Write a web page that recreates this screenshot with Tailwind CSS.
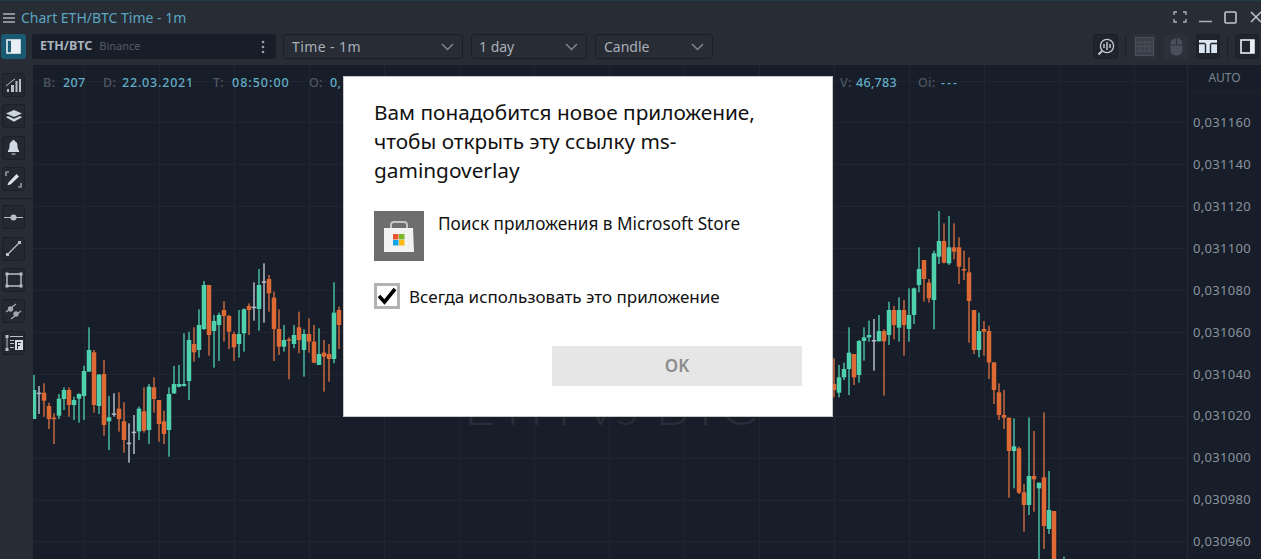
<!DOCTYPE html>
<html lang="ru">
<head>
  <meta charset="UTF-8" />
  <title>Chart ETH/BTC</title>
  <script src="https://cdn.jsdelivr.net/npm/@tailwindcss/browser@4"></script>
</head>
<body class="bg-[#272c35] h-[559px] w-[1261px] overflow-hidden relative font-['Noto_Sans',sans-serif]">
  <!-- title bar -->
  <div class="h-[33px] flex items-center border-t border-[#1f3d49] pl-[3px] pr-0">
    <svg class="w-[12px] h-[12px] mr-[6px] mt-[1px]" viewBox="0 0 12 12" stroke="#a9b2bd" stroke-width="1.4"><path d="M0 2h12M0 6h12M0 10h12"/></svg>
    <span class="text-[14px] text-[#5ba6c2]">Chart ETH/BTC Time - 1m</span>
    <div class="ml-auto flex items-center">
      <svg class="w-[14px] h-[12px] mr-[12px]" viewBox="0 0 14 12" fill="none" stroke="#aab2bc" stroke-width="1.4"><path d="M1 4V1h3M10 1h3v3M13 8v3h-3M4 11H1V8"/></svg>
      <svg class="w-[13px] h-[12px] mr-[12px]" viewBox="0 0 13 12" stroke="#aab2bc" stroke-width="1.5"><path d="M0 10.5h13"/></svg>
      <svg class="w-[13px] h-[13px] mr-[13px]" viewBox="0 0 13 13" fill="none" stroke="#c0c6ce" stroke-width="1.6"><rect x="1" y="1" width="11" height="11" rx="1"/></svg>
      <svg class="w-[12px] h-[12px] -mr-[1px]" viewBox="0 0 12 12" stroke="#c0c6ce" stroke-width="1.5"><path d="M1 1l10 10M11 1L1 11"/></svg>
    </div>
  </div>

  <!-- toolbar -->
  <div class="h-[32px] flex items-start pt-[1px] pl-[1px]">
    <button class="w-[25px] h-[25px] bg-[#1a5a72] rounded-[3px] flex items-center justify-center mr-[6px]">
      <svg class="w-[15px] h-[15px]" viewBox="0 0 15 15"><rect x="1" y="1" width="13" height="13" fill="none" stroke="#e8eef3" stroke-width="1.6"/><rect x="5" y="1" width="9" height="13" fill="#e8eef3"/></svg>
    </button>
    <div class="w-[244px] h-[25px] bg-[#181e29] rounded-[3px] flex items-center pl-[8px] mr-[7px]">
      <span class="text-[12.500px] font-bold text-[#aab2bc]">ETH/BTC</span>
      <span class="text-[11px] text-[#535b67] ml-[7px]">Binance</span>
      <svg class="w-[4px] h-[14px] ml-auto mr-[11px]" viewBox="0 0 4 14" fill="#98a0aa"><circle cx="2" cy="2" r="1.3"/><circle cx="2" cy="7" r="1.3"/><circle cx="2" cy="12" r="1.3"/></svg>
    </div>
    <div class="w-[180px] h-[25px] border border-[#1a1f28] rounded-[3px] flex items-center pl-[8px] pr-[8px] mr-[8px] text-[14px] text-[#a9b0b9]">
      <span class="tracking-[0.400px]">Time - 1m</span>
      <svg class="w-[13px] h-[8px] ml-auto" viewBox="0 0 13 8" fill="none" stroke="#7f8792" stroke-width="1.5"><path d="M1 1l5.5 5.5L12 1"/></svg>
    </div>
    <div class="w-[116px] h-[25px] border border-[#1a1f28] rounded-[3px] flex items-center pl-[7px] pr-[8px] mr-[8px] text-[14px] text-[#a9b0b9]">
      <span>1 day</span>
      <svg class="w-[13px] h-[8px] ml-auto" viewBox="0 0 13 8" fill="none" stroke="#7f8792" stroke-width="1.5"><path d="M1 1l5.5 5.5L12 1"/></svg>
    </div>
    <div class="w-[118px] h-[25px] border border-[#1a1f28] rounded-[3px] flex items-center pl-[8px] pr-[8px] text-[14px] text-[#a9b0b9]">
      <span>Candle</span>
      <svg class="w-[13px] h-[8px] ml-auto" viewBox="0 0 13 8" fill="none" stroke="#7f8792" stroke-width="1.5"><path d="M1 1l5.5 5.5L12 1"/></svg>
    </div>

    <div class="ml-auto flex items-center h-[25px] pr-[2px]">
      <button class="w-[25px] h-[25px] bg-[#1f242d] border border-[#1a1f28] rounded-[3px] flex items-center justify-center">
        <svg class="w-[18px] h-[18px]" viewBox="0 0 18 18" fill="none" stroke="#c3c9d0" stroke-width="1.3"><circle cx="10" cy="8" r="6.6"/><path d="M5 13l-3.5 3.5" stroke-width="2"/><path d="M7 6v4M10 4v8M13 6v4" stroke-width="1.5"/></svg>
      </button>
      <div class="w-px h-[22px] bg-[#1b2027] mx-[7px]"></div>
      <button class="w-[23px] h-[25px] bg-[#2b3039] rounded-[3px] flex items-center justify-center mr-[8px]">
        <svg class="w-[19px] h-[19px]" viewBox="0 0 19 19" fill="#3a404a" stroke="#4a505b"><rect x="0.5" y="0.5" width="18" height="18"/><path d="M0 5h19M0 9.500h19M0 14h19M5 5v4M10 5v4M14 5v4M5 9.500v4.500M10 9.500v4.500M14 9.500v4.500"/></svg>
      </button>
      <button class="w-[24px] h-[25px] bg-[#2b3039] rounded-[3px] flex items-center justify-center mr-[8px]">
        <svg class="w-[13px] h-[18px]" viewBox="0 0 13 18"><rect x="0.500" y="0.500" width="12" height="17" rx="5" fill="#4a505b"/><path d="M0 7h13M6.500 1v6" stroke="#2b3039"/></svg>
      </button>
      <button class="w-[24px] h-[25px] bg-[#1f242d] border border-[#1a1f28] rounded-[3px] flex items-center justify-center">
        <svg class="w-[18px] h-[13px]" viewBox="0 0 18 13"><rect width="18" height="13" fill="#dbe6f2"/><path d="M6.500 4v9M11.500 4v9M0 3.500h6.500M11.500 3.500H18" fill="none" stroke="#1f242d" stroke-width="1.400"/></svg>
      </button>
      <div class="w-px h-[22px] bg-[#1b2027] mx-[7px]"></div>
      <button class="w-[24px] h-[25px] bg-[#1f242d] border border-[#1a1f28] rounded-[3px] flex items-center justify-center">
        <svg class="w-[15px] h-[15px]" viewBox="0 0 15 15"><rect x="1" y="1" width="13" height="13" fill="none" stroke="#e8eef3" stroke-width="1.6"/><rect x="10" y="1" width="4" height="13" fill="#e8eef3"/></svg>
      </button>
    </div>
  </div>

  <!-- main -->
  <div class="flex h-[494px]">
    <!-- left tools -->
    <div class="w-[33px] shrink-0 pt-[8px] pl-[2px] flex flex-col">
      <div class="flex flex-col gap-[7.400px] pr-[8px]">
        <button class="w-[23px] h-[24px] bg-[#232831] border border-[#1a1f28] rounded-[3px] flex items-center justify-center">
          <svg class="w-[15px] h-[14px]" viewBox="0 0 15 14" fill="#b7c0ca"><path d="M1 14v-3h2v3zM5 14V7h3v7zM9.500 14V3h2v11zM13 14V1h2v13z"/><path d="M0 8L6 3l3-2" fill="none" stroke="#b7c0ca"/></svg>
        </button>
        <button class="w-[23px] h-[24px] bg-[#232831] border border-[#1a1f28] rounded-[3px] flex items-center justify-center">
          <svg class="w-[16px] h-[13px]" viewBox="0 0 16 13" fill="#ccd5de"><path d="M8 0l8 3.500-8 3.500-8-3.500z"/><path d="M2 6l6 2.700L14 6l2 1.200-8 4.500-8-4.500z"/></svg>
        </button>
        <button class="w-[23px] h-[24px] bg-[#232831] border border-[#1a1f28] rounded-[3px] flex items-center justify-center">
          <svg class="w-[11px] h-[15px]" viewBox="0 0 11 15" fill="#d2dbe5"><path d="M5.500 0c1 0 1.300.7 1.300 1.300C9 2 9.500 4 9.500 6c0 2 .5 3.500 1.500 4.500V12H0v-1.500C1 9.500 1.500 8 1.500 6c0-2 .5-4 2.700-4.700C4.200.7 4.500 0 5.500 0z"/><path d="M3.500 13.500h4v1h-4z"/></svg>
        </button>
        <button class="w-[23px] h-[24px] bg-[#232831] border border-[#1a1f28] rounded-[3px] flex items-center justify-center">
          <svg class="w-[17px] h-[17px]" viewBox="0 0 17 17" fill="none" stroke="#b7c0ca" stroke-width="1.200"><path d="M1 5V1h3M16 12v4h-3"/><path d="M3.500 11.500l8-8.500 2.500 2.500-8.500 8-3 .7z" fill="#dbe3ec" stroke="none"/></svg>
        </button>
      </div>
      <div class="h-px bg-[#1a1f28] mt-[7px] mb-[6px] -ml-[2px]"></div>
      <div class="flex flex-col gap-[7.400px] pr-[8px]">
        <button class="w-[23px] h-[24px] bg-[#232831] border border-[#1a1f28] rounded-[3px] flex items-center justify-center">
          <svg class="w-[19px] h-[7px]" viewBox="0 0 19 7" fill="#b7c0ca"><path d="M0 3h19v1H0z"/><circle cx="9.500" cy="3.500" r="3"/></svg>
        </button>
        <button class="w-[23px] h-[24px] bg-[#232831] border border-[#1a1f28] rounded-[3px] flex items-center justify-center">
          <svg class="w-[17px] h-[17px]" viewBox="0 0 17 17" fill="#b7c0ca" stroke="#b7c0ca"><path d="M3 14L14 3" stroke-width="1.200"/><rect x="1" y="13" width="3" height="3" stroke="none"/><rect x="13" y="1" width="3" height="3" stroke="none"/></svg>
        </button>
        <button class="w-[23px] h-[24px] bg-[#232831] border border-[#1a1f28] rounded-[3px] flex items-center justify-center">
          <svg class="w-[18px] h-[16px]" viewBox="0 0 18 16" fill="#b7c0ca"><path d="M2 2h14v12H2z" fill="none" stroke="#b7c0ca" stroke-width="1.400"/><rect width="3" height="3" x="0.500" y="0.500"/><rect width="3" height="3" x="14.500" y="0.500"/><rect width="3" height="3" x="0.500" y="12.500"/><rect width="3" height="3" x="14.500" y="12.500"/></svg>
        </button>
        <button class="w-[23px] h-[24px] bg-[#232831] border border-[#1a1f28] rounded-[3px] flex items-center justify-center">
          <svg class="w-[17px] h-[17px]" viewBox="0 0 17 17" fill="#a0a8b3" stroke="#a0a8b3" stroke-width="1.300"><path d="M1 9L11 1M6 16L16 8"/><circle cx="5.500" cy="6" r="2"/><circle cx="11" cy="11" r="2"/></svg>
        </button>
        <button class="w-[23px] h-[24px] bg-[#232831] border border-[#1a1f28] rounded-[3px] flex items-center justify-center">
          <svg class="w-[18px] h-[16px]" viewBox="0 0 18 16" fill="#b7c0ca"><rect x="0.500" y="0" width="3" height="3"/><rect x="0.500" y="13" width="3" height="3"/><rect x="1.500" y="2" width="1" height="11"/><path d="M5 1h13v1H5zM5 5h4v1H5zM5 8h4v1H5zM5 12h4v1H5z"/><rect x="10" y="5" width="8" height="10" fill="#d5dde6"/><path d="M12 7h4v1h-3v2h2v1h-2v3h-1z" fill="#232831"/></svg>
        </button>
      </div>
    </div>

    <!-- chart -->
    <div class="relative w-[1154px] shrink-0 bg-[#171e29] overflow-hidden">
      <svg id="chart" class="absolute inset-0" width="1154" height="494" viewBox="33 65 1154 494"></svg>
      <div class="absolute left-0 right-0 top-[304px] text-center text-[55px] leading-[70px] font-light text-[#272e39] pl-[2px] font-['Lato',sans-serif] tracking-[1px]">ETH vs BTC</div>
      <div class="absolute left-[10px] top-[9px] flex items-center text-[12.500px] leading-[18px] font-medium tracking-[0.300px] text-[#4e5661]">
        <span class="w-[20px]">B:</span><span class="w-[40px] text-[#62adc7]">207</span>
        <span class="w-[19px]">D:</span><span class="w-[91px] tracking-[0.800px] text-[#62adc7]">22.03.2021</span>
        <span class="w-[19px]">T:</span><span class="w-[77px] tracking-[1px] text-[#62adc7]">08:50:00</span>
        <span class="w-[21px]">O:</span><span class="w-[510px] text-[#62adc7]">0,</span>
        <span class="w-[16px]">V:</span><span class="w-[62px] text-[#62adc7]">46,783</span>
        <span class="w-[23px]">Oi:</span><span class="tracking-[2px] text-[#62adc7]">---</span>
      </div>
    </div>

    <!-- price axis -->
    <div class="flex-1 bg-[#171e29] border-l border-[#222934] flex flex-col overflow-hidden text-[13px] tracking-[0.300px] text-[#8a929c]">
      <div class="h-[27px] shrink-0 border-b border-[#1e252f] flex items-center justify-center text-[12px] tracking-normal text-[#7d858f]">AUTO</div>
      <div class="shrink-0 pl-[5px] pt-[10px]">
        <div class="h-[41.900px] flex items-center">0,031160</div>
        <div class="h-[41.900px] flex items-center">0,031140</div>
        <div class="h-[41.900px] flex items-center">0,031120</div>
        <div class="h-[41.900px] flex items-center">0,031100</div>
        <div class="h-[41.900px] flex items-center">0,031080</div>
        <div class="h-[41.900px] flex items-center">0,031060</div>
        <div class="h-[41.900px] flex items-center">0,031040</div>
        <div class="h-[41.900px] flex items-center">0,031020</div>
        <div class="h-[41.900px] flex items-center">0,031000</div>
        <div class="h-[41.900px] flex items-center">0,030980</div>
        <div class="h-[41.900px] flex items-center">0,030960</div>
      </div>
    </div>
  </div>

  <!-- windows dialog over the chart -->
  <div class="absolute left-[343px] top-[76px] w-[490px] h-[341px] bg-white border border-[#c8c8c8] pl-[30px] pr-[30px] pt-[21px]">
    <h1 class="text-[20.800px] leading-[29px] text-[#111] w-[410px]">Вам понадобится новое приложение, чтобы открыть эту ссылку ms-gamingoverlay</h1>
    <div class="flex mt-[26px]">
      <div class="w-[50px] h-[50px] bg-[#6e6e6e] shrink-0">
        <svg width="50" height="50" viewBox="0 0 50 50">
          <path d="M17 17v-3a3 3 0 0 1 3-3h10a3 3 0 0 1 3 3v3" fill="none" stroke="#c4c4c4" stroke-width="2"/>
          <path d="M10 17h29l1 24H10z" fill="#f2f2f2"/>
          <rect x="19" y="23" width="5.500" height="5.500" fill="#e8542b"/>
          <rect x="25" y="23" width="5.500" height="5.500" fill="#7cb928"/>
          <rect x="19" y="29" width="5.500" height="5.500" fill="#12a5e8"/>
          <rect x="25" y="29" width="5.500" height="5.500" fill="#fcb814"/>
        </svg>
      </div>
      <span class="ml-[14px] text-[17.200px] leading-[24px] text-[#111] mt-[1px]">Поиск приложения в Microsoft Store</span>
    </div>
    <div class="flex items-center h-[26px] mt-[22px]">
      <div class="w-[26px] h-[26px] border-[3px] border-[#b3b3b3] bg-white flex items-center justify-center">
        <svg width="20" height="18" viewBox="0 0 20 18"><path d="M2 9l5.500 6L18 2" fill="none" stroke="#000" stroke-width="3.600"/></svg>
      </div>
      <span class="ml-[9px] mt-[1px] text-[17px] text-[#111]">Всегда использовать это приложение</span>
    </div>
    <div class="flex justify-end mt-[37px]">
      <button class="w-[250px] h-[40px] bg-[#e6e6e6] text-[#8c8c8c] text-[17px] font-semibold">OK</button>
    </div>
  </div>

  <script>
    // [x, high, low, bodyTop, bodyBottom, color] read off the picture, page pixels
    const G = "g", O = "o", W = "w";
    const leftSide = [
      [102,375,507,420,507,G],[117,408,492,428,431,W],[132,400,500,428,452,O],[147,458,537,468,507,O],
      [162,490,582,503,506,O],[177,432,507,446,497,G],[192,412,480,420,447,G],[207,412,500,420,465,O],
      [222,440,510,450,465,G],[237,430,518,432,446,G],[252,347,510,363,438,G],[267,232,365,300,365,G],
      [282,300,488,307,465,O],[297,372,492,374,468,G],[312,330,557,372,525,O],[327,438,600,502,514,G],
      [342,430,500,490,493,W],[357,427,545,476,507,O],[372,457,608,514,570,O],[387,520,638,578,581,W],
      [402,495,612,545,548,W],[417,470,570,476,544,G],[432,412,548,484,542,O],[447,402,582,410,540,G],
      [462,382,488,412,447,O],[477,450,575,450,522,O],[492,482,582,514,552,O],[507,412,620,432,540,G],
      [522,348,432,402,430,G],[537,345,412,402,410,G],[552,250,410,402,408,G],[567,245,450,270,393,G],
      [582,232,335,282,307,O],[597,178,323,225,300,G],[612,93,240,105,237,G],[627,105,317,105,255,O],
      [642,195,353,213,243,G],[657,188,333,195,225,G],[672,153,275,180,198,O],[687,195,297,198,245,O],
      [702,245,333,252,292,O],[717,180,323,252,282,G],[732,175,305,178,250,G],[747,160,255,168,180,O],
      [762,97,212,170,173,W],[777,57,242,105,177,G],[792,40,218,94,98,W],[807,75,185,87,130,O],
      [822,125,333,143,237,O],[837,178,315,237,290,O],[852,225,305,270,290,G],[867,262,388,268,272,O],
      [882,225,295,255,282,G],[897,185,310,232,270,O],[912,238,380,252,300,G],[927,205,308,252,275,O],
      [942,225,340,275,338,O],[957,235,345,312,345,G],[972,270,425,308,320,O],[987,282,395,312,327,O],
      [1002,97,340,188,327,G],[1017,170,297,180,225,O]
    ];
    const rightSide = [
      [12,475,592,552,570,O],[27,495,592,532,578,G],[42,488,540,507,532,G],[57,382,585,458,507,G],
      [72,462,555,462,532,O],[87,420,548,423,525,G],[102,382,482,412,423,G],[117,362,425,405,412,G],
      [132,357,512,420,423,W],[147,345,424,393,424,G],[162,388,587,393,424,O],[177,305,435,330,405,G],
      [192,318,418,330,375,O],[207,292,425,330,383,G],[222,300,467,330,375,O],[237,265,425,345,387,G],
      [252,263,372,265,345,G],[267,142,277,207,255,G],[282,180,305,180,237,O],[297,237,308,248,295,O],
      [312,152,388,160,300,G],[327,33,192,123,170,G],[342,70,190,123,188,O],[357,48,195,142,190,G],
      [372,70,178,142,155,O],[387,112,252,142,200,O],[402,152,240,207,210,O],[417,172,428,217,303,O],
      [432,330,462,330,450,O],[447,338,472,393,450,G],[462,363,467,387,395,O],[477,377,537,393,487,O],
      [492,487,612,487,570,O],[507,550,660,577,645,O],[522,570,687,645,653,O],[537,653,893,653,753,O],
      [552,655,865,739,753,G],[567,740,882,745,878,O],[582,852,995,877,915,O],[597,652,945,828,915,G],
      [612,693,935,828,838,O],[627,848,1085,848,865,G],[642,637,1047,832,978,O],[657,813,1002,930,987,G],
      [672,933,1085,933,1085,O],[702,1070,1085,1080,1085,G]
    ];
    const body = { g: "#4fd1ae", o: "#dd6a35", w: "#b3bbc7" };
    const wick = { g: "#3f9f90", o: "#a95a39", w: "#98a2b0" };

    let svg = "";
    for (let x = 84; x < 1187; x += 75) svg += `<rect x="${x}" y="65" width="1" height="494" fill="#1f2631"/>`;
    for (let i = 0; i < 12; i++) {
      const y = Math.round(80.5 + i * 41.9);
      svg += `<rect x="33" y="${y}" width="1154" height="1" fill="#1f2631"/>`;
    }
    function candle(c, px, py, oy) {
      const x = px / 3 + c[0] / 3, hi = c[1] / 3 + oy, lo = c[2] / 3 + oy;
      const top = c[3] / 3 + oy;
      const h = Math.max(1.5, (c[4] - c[3]) / 3);
      svg += `<rect x="${x - 0.9}" y="${hi}" width="1.800" height="${lo - hi}" fill="${wick[c[5]]}"/>`;
      svg += `<rect x="${x - 2.25}" y="${top}" width="4.500" height="${h}" fill="${body[c[5]]}"/>`;
    }
    leftSide.forEach(c => candle(c, 0, 0, 250));
    rightSide.forEach(c => candle(c, 2490, 0, 200));
    document.getElementById("chart").innerHTML = svg;
  </script>
</body>
</html>
